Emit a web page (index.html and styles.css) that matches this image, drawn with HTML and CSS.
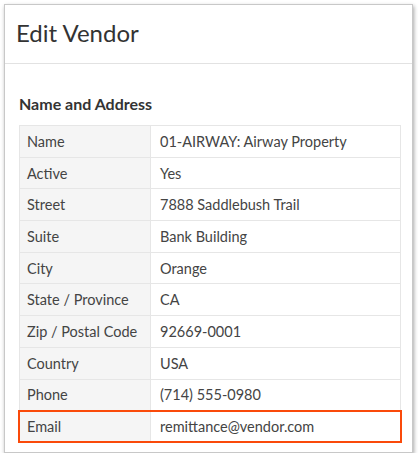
FILE: index.html
```html
<!DOCTYPE html>
<html>
<head>
<meta charset="utf-8">
<link rel="stylesheet" href="styles.css">
</head>
<body>
<div class="card">
  <div class="card-header">Edit Vendor</div>
  <div class="card-body">
    <div class="section-title">Name and Address</div>
    <div class="grid">
      <div class="row"><div class="label">Name</div><div class="value">01-AIRWAY: Airway Property</div></div>
      <div class="row"><div class="label">Active</div><div class="value">Yes</div></div>
      <div class="row"><div class="label">Street</div><div class="value">7888 Saddlebush Trail</div></div>
      <div class="row"><div class="label">Suite</div><div class="value">Bank Building</div></div>
      <div class="row"><div class="label">City</div><div class="value">Orange</div></div>
      <div class="row"><div class="label">State / Province</div><div class="value">CA</div></div>
      <div class="row"><div class="label">Zip / Postal Code</div><div class="value">92669-0001</div></div>
      <div class="row"><div class="label">Country</div><div class="value">USA</div></div>
      <div class="row"><div class="label">Phone</div><div class="value">(714) 555-0980</div></div>
      <div class="row highlight"><div class="label">Email</div><div class="value">remittance@vendor.com</div></div>
    </div>
  </div>
</div>
</body>
</html>
```

FILE: styles.css
```css
html, body {
  margin: 0;
  padding: 0;
  background: #ffffff;
}
body {
  font-family: Lato, "Open Sans", sans-serif;
  color: #333;
  padding: 4px 5px 0 4px;
}
.card {
  width: 407px;
  height: 447px;
  border: 1px solid #c8c8c8;
  background: #fff;
  box-shadow: 1px 2px 4px rgba(0,0,0,0.35);
}
.card-header {
  height: 59px;
  border-bottom: 1px solid #e2e2e2;
  box-sizing: border-box;
  padding-left: 11px;
  font-size: 24px;
  line-height: 56px;
  color: #333;
}
.card-body {
  padding: 30px 11px 0 14px;
}
.section-title {
  font-size: 16px;
  font-weight: bold;
  line-height: 20px;
  color: #333;
  margin-bottom: 11px;
}
.grid {
  border: 1px solid #e6e6e6;
  border-bottom: none;
}
.row {
  display: flex;
  height: 31.7px;
  box-sizing: border-box;
  border-bottom: 1px solid #e6e6e6;
  font-size: 14.5px;
  color: #444;
}
.label {
  width: 131px;
  box-sizing: border-box;
  flex: none;
  background: #f5f5f5;
  border-right: 1px solid #e6e6e6;
  padding-left: 7px;
  display: flex;
  align-items: center;
}
.value {
  flex: 1;
  padding-left: 9px;
  display: flex;
  align-items: center;
}
.highlight {
  position: relative;
}
.highlight::after {
  content: "";
  position: absolute;
  left: -2px;
  right: -2px;
  top: -1px;
  bottom: -1px;
  border: 2px solid #fa4a0a;
}
```
